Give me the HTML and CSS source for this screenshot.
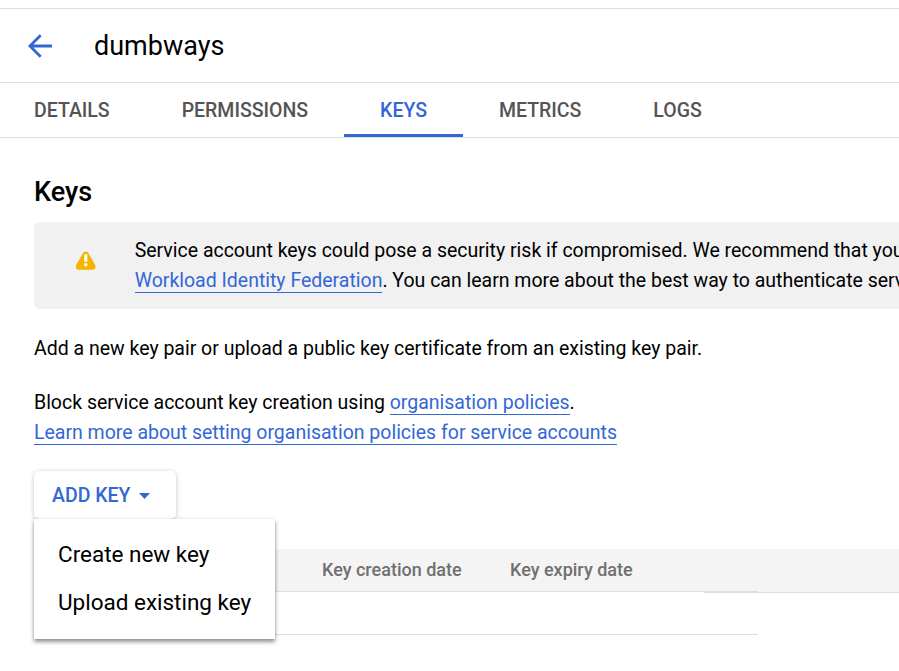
FILE: index.html
```html
<!DOCTYPE html>
<html lang="en-GB">
<head>
<meta charset="utf-8">
<title>dumbways</title>
<link rel="stylesheet" href="styles.css">
</head>
<body>
<header class="header">
  <svg class="back" width="24" height="24" viewBox="0 0 24 24"><path d="M24 12H2M12.700 1.200L1.900 12L12.700 22.800" fill="none" stroke="#3367d6" stroke-width="2.800"/></svg>
  <h1 class="title">dumbways</h1>
</header>
<nav class="tabs">
  <a class="tab">DETAILS</a>
  <a class="tab">PERMISSIONS</a>
  <a class="tab active">KEYS</a>
  <a class="tab">METRICS</a>
  <a class="tab">LOGS</a>
</nav>
<main class="main">
  <h2 class="heading">Keys</h2>
  <section class="notice">
    <svg class="warn" width="20" height="19" viewBox="0 0 20 19"><path d="M7.200 1.800Q9.700-1.400 12.200 1.800L19.200 14Q20.400 18.600 17 18.700H2.400Q-1 18.600.2 14Z" fill="#f5b400"/><path d="M8.300 3.300h3v7.500h-3zM8.300 12.200h3v3h-3z" fill="#fff"/></svg>
    <div class="notice-text">
      <div>Service account keys could pose a security risk if compromised. We recommend that you</div>
      <div><a class="link">Workload Identity Federation</a>. You can learn more about the best way to authenticate serv</div>
    </div>
  </section>
  <p class="text">Add a new key pair or upload a public key certificate from an existing key pair.</p>
  <p class="text policies">Block service account key creation using <a class="link">organisation policies</a>.<br><a class="link">Learn more about setting organisation policies for service accounts</a></p>
  <div class="dropdown">
    <button class="button"><span class="label">ADD KEY</span><svg class="caret" width="11" height="6" viewBox="0 0 11 6"><path d="M0 0h11L5.500 6z" fill="#3367d6"/></svg></button>
    <div class="menu">
      <div class="item">Create new key</div>
      <div class="item">Upload existing key</div>
    </div>
  </div>
  <div class="table">
    <div class="thead">
      <div class="cells"><span class="created">Key creation date</span><span class="expiry">Key expiry date</span></div>
      <div class="rest"></div>
    </div>
    <div class="row"></div>
  </div>
</main>
</body>
</html>
```
FILE: styles.css
```css
* { box-sizing: border-box; }
body {
  margin: 0;
  padding-top: 8px;
  height: 671px;
  overflow: hidden;
  background: #fff;
  color: #000;
  font: 19.5px/30px Roboto, "Liberation Sans", sans-serif;
  letter-spacing: -.01px;
}
.header {
  display: flex;
  align-items: center;
  height: 75px;
  padding-left: 28px;
  border-top: 1px solid #dedede;
  border-bottom: 1px solid #dedede;
}
.title { margin: 0 0 0 42px; font-size: 27px; font-weight: 400; line-height: 36px; }
.tabs { display: flex; height: 55px; border-bottom: 1px solid #dedede; }
.tab {
  height: 54px;
  padding: 0 36px;
  line-height: 56px;
  font-weight: 500;
  color: #545454;
  white-space: nowrap;
}
.tab:first-child { padding-left: 34px; }
.active { color: #3367d6; border-bottom: 3px solid #3367d6; }
.main { padding-left: 34px; }
.heading { margin: 0; padding-top: 36px; font-size: 27px; font-weight: 500; line-height: 36px; }
.notice {
  display: flex;
  height: 87px;
  margin-top: 12px;
  padding: 14px 0 0 42px;
  border-radius: 6px 0 0 6px;
  background: #f1f1f1;
  overflow: hidden;
}
.warn { flex: none; margin: 15px 38.7px 0 0; }
.notice-text { white-space: nowrap; }
.link { color: #3367d6; border-bottom: 1px solid #3367d6; }
.text { margin: 25px 0 0; white-space: nowrap; }
.policies { margin-top: 24px; }
.dropdown { position: relative; width: 142px; margin-top: 23px; }
.button {
  display: flex;
  align-items: center;
  gap: 8px;
  width: 142px;
  height: 48px;
  padding: 0 0 0 18px;
  border: 0;
  border-radius: 5px;
  background: #fff;
  box-shadow: 0 1px 5px rgba(0,0,0,.24);
  color: #3367d6;
  font: 500 19.5px/46px Roboto, "Liberation Sans", sans-serif;
}
.label { padding-top: 2px; }
.caret { margin-top: 1px; }
.menu {
  position: absolute;
  z-index: 2;
  left: 0;
  top: 48px;
  width: 241px;
  height: 120px;
  padding: 11px 24px;
  background: #fff;
  box-shadow: 0 3px 4px rgba(0,0,0,.4), 0 0 4px rgba(0,0,0,.12);
}
.item { height: 48px; font-size: 22.5px; line-height: 48px; white-space: nowrap; }
.table { margin-top: 30px; }
.thead { display: flex; height: 44px; background: linear-gradient(#f4f4f4, #f4f4f4) 0 0 / 100% 43px no-repeat; }
.cells {
  display: flex;
  flex: none;
  width: 724px;
  height: 43px;
  padding-left: 288px;
  border-bottom: 1px solid #dedede;
  font-size: 18px;
  font-weight: 500;
  line-height: 42px;
  letter-spacing: 0;
  color: #707070;
  white-space: nowrap;
}
.created { width: 188px; }
.rest { flex: 1; margin-left: -54px; border-bottom: 1px solid #dedede; }
.row { width: 724px; height: 42px; border-bottom: 1px solid #dedede; }
```
